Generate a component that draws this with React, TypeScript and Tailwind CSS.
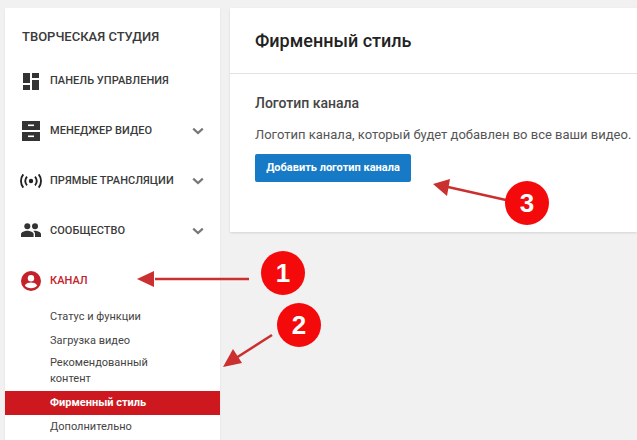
import React from "react";

const Chevron = () => (
  <svg width="12" height="8" viewBox="0 0 12 8" className="ml-auto mr-[16px] shrink-0">
    <path d="M1.2 1.6 L6 6 L10.8 1.6" fill="none" stroke="#777" strokeWidth="2.2" />
  </svg>
);

const Row = ({ icon, label, chevron, active }: { icon: React.ReactNode; label: string; chevron?: boolean; active?: boolean }) => (
  <div className="flex h-[50px] items-center">
    <div className="flex w-[45px] shrink-0 justify-center pl-[6px]">{icon}</div>
    <span className={`text-[11px] font-medium whitespace-nowrap tracking-[0.05px] ${active ? "text-[#c4212a]" : "text-[#3a3a3a]"}`}>{label}</span>
    {chevron && <Chevron />}
  </div>
);

const Sub = ({ children, active, className = "" }: { children: React.ReactNode; active?: boolean; className?: string }) => (
  <div className={`pl-[45px] text-[11px] leading-[16px] flex items-center ${active ? "bg-[#cc181e] text-white font-bold" : "text-[#444]"} ${className}`}>
    <span className="max-w-[120px]">{children}</span>
  </div>
);

const Badge = ({ n, className }: { n: string; className: string }) => (
  <div className={`absolute flex h-[44px] w-[44px] items-center justify-center rounded-full bg-[#f40a0a] text-[26px] font-bold text-white ${className}`} style={{ fontFamily: '"Liberation Sans", sans-serif' }}>
    {n}
  </div>
);

export default function App() {
  return (
    <div className="relative h-[440px] w-[637px] overflow-hidden bg-[#f1f1f1]" style={{ fontFamily: 'Roboto, "Liberation Sans", sans-serif' }}>
      <div className="flex h-full items-start gap-[10px] pl-[5px] pt-[8px]">
        <aside className="h-[432px] w-[215px] shrink-0 bg-white shadow-[0_1px_2px_rgba(0,0,0,0.08)]">
          <div className="pl-[17px] pt-[21px] text-[13px] leading-[16px] font-medium whitespace-nowrap text-[#3a3a3a]">ТВОРЧЕСКАЯ СТУДИЯ</div>
          <div className="mt-[11px]">
            <Row
              label="ПАНЕЛЬ УПРАВЛЕНИЯ"
              icon={
                <svg width="16" height="17" viewBox="0 0 16 17" fill="#333">
                  <rect x="0" y="0" width="7" height="10" />
                  <rect x="9" y="0" width="7" height="5" />
                  <rect x="0" y="12" width="7" height="5" />
                  <rect x="9" y="7" width="7" height="10" />
                </svg>
              }
            />
            <Row
              chevron
              label="МЕНЕДЖЕР ВИДЕО"
              icon={
                <svg width="18" height="20" viewBox="0 0 18 20">
                  <rect x="0" y="0" width="18" height="9" fill="#333" />
                  <rect x="0" y="11" width="18" height="9" fill="#333" />
                  <rect x="6" y="3.5" width="6" height="1.6" fill="#fff" />
                  <rect x="6" y="14.5" width="6" height="1.6" fill="#fff" />
                </svg>
              }
            />
            <Row
              chevron
              label="ПРЯМЫЕ ТРАНСЛЯЦИИ"
              icon={
                <svg width="22" height="16" viewBox="0 0 24 16" fill="none" stroke="#222" strokeWidth="2">
                  <circle cx="12" cy="8" r="2.4" fill="#222" stroke="none" />
                  <path d="M7.6 3.2 C5.4 6 5.4 10 7.6 12.8" />
                  <path d="M16.4 3.2 C18.6 6 18.6 10 16.4 12.8" />
                  <path d="M3.6 .8 C.2 5 .2 11 3.6 15.2" />
                  <path d="M20.4 .8 C23.8 5 23.8 11 20.4 15.2" />
                </svg>
              }
            />
            <Row
              chevron
              label="СООБЩЕСТВО"
              icon={
                <svg width="20" height="14" viewBox="0 0 20 14" fill="#333" className="-mt-[2px]">
                  <circle cx="6.3" cy="3.3" r="3" />
                  <circle cx="14" cy="3.3" r="3" />
                  <path d="M0 14 V11.2 C0 9 4 7.8 6.3 7.8 C8.6 7.8 12.6 9 12.6 11.2 V14 Z" />
                  <path d="M14 7.8 C16.2 7.8 20 9 20 11.2 V14 H14 V11 C14 9.6 13.2 8.6 12.2 8 C12.8 7.9 13.4 7.8 14 7.8 Z" />
                </svg>
              }
            />
            <Row
              active
              label="КАНАЛ"
              icon={
                <svg width="20" height="20" viewBox="0 0 20 20">
                  <circle cx="10" cy="10" r="10" fill="#c4212a" />
                  <circle cx="10" cy="7.2" r="3.2" fill="#fff" />
                  <path d="M3.8 14.4 C5 12.2 8 11.6 10 11.6 C12 11.6 15 12.2 16.2 14.4 C14.8 16.2 12.6 17.2 10 17.2 C7.4 17.2 5.2 16.2 3.8 14.4 Z" fill="#fff" />
                </svg>
              }
            />
          </div>
          <div className="-mt-[1px]">
            <Sub className="h-[24px]">Статус и функции</Sub>
            <Sub className="h-[24px]">Загрузка видео</Sub>
            <Sub className="h-[38px] pb-[3px]">Рекомендованный контент</Sub>
            <Sub active className="h-[24px]">Фирменный стиль</Sub>
            <Sub className="h-[24px]">Дополнительно</Sub>
          </div>
        </aside>

        <main className="h-[224px] flex-1 bg-white shadow-[0_1px_2px_rgba(0,0,0,0.12)]">
          <div className="flex h-[66px] items-center border-b border-[#e2e2e2] pl-[25px] text-[18px] font-medium whitespace-nowrap text-[#222]">Фирменный стиль</div>
          <div className="pl-[25px] pt-[20px]">
            <div className="text-[14px] leading-[18px] font-medium text-[#444]">Логотип канала</div>
            <div className="mt-[14px] text-[13px] leading-[18px] whitespace-nowrap text-[#555]">Логотип канала, который будет добавлен во все ваши видео.</div>
            <button className="mt-[10px] flex h-[28px] w-[156px] items-center justify-center rounded-[2px] bg-[#167ac6] text-[11px] font-bold text-white">Добавить логотип канала</button>
          </div>
        </main>
      </div>

      <svg className="absolute top-0 left-0" width="637" height="440" viewBox="0 0 637 440" fill="#c9302f" stroke="none">
        <path d="M249 279 H155" stroke="#c9302f" strokeWidth="2.5" fill="none" />
        <polygon points="137,279 154,271 154,287" />
        <path d="M272 335 L236 358" stroke="#c9302f" strokeWidth="2.5" fill="none" />
        <polygon points="223,367 233,349 242,363" />
        <path d="M506 200 L448 187" stroke="#c9302f" strokeWidth="2.5" fill="none" />
        <polygon points="433,184 450,179 447,196" />
      </svg>
      <Badge n="1" className="left-[261px] top-[251px]" />
      <Badge n="2" className="left-[277px] top-[303px]" />
      <Badge n="3" className="left-[505px] top-[181px]" />
    </div>
  );
}
